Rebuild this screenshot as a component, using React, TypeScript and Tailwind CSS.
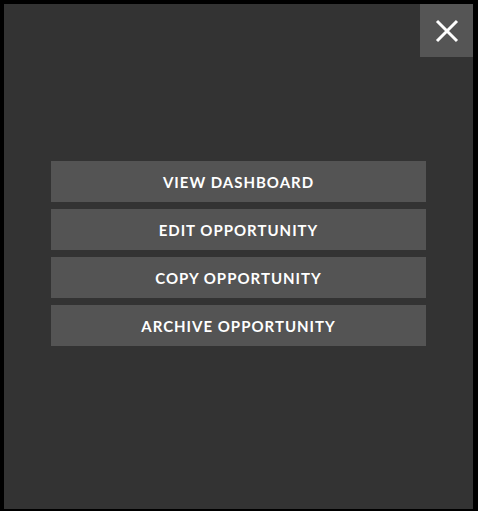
import React from "react";

const items = ["VIEW DASHBOARD", "EDIT OPPORTUNITY", "COPY OPPORTUNITY", "ARCHIVE OPPORTUNITY"];

export default function App() {
  return (
    <div className="w-[478px] h-[511px] bg-black pt-[4px] pl-[4px] pr-[5px] pb-[2px]">
      <div className="w-full h-full bg-[#333333] flex flex-col">
        <div className="flex justify-end">
          <button className="w-[53px] h-[53px] bg-[#555555] flex items-center justify-center">
            <svg width="24" height="24" viewBox="0 0 24 24" fill="none">
              <path d="M2 2L22 22M22 2L2 22" stroke="white" strokeWidth="3" />
            </svg>
          </button>
        </div>
        <div className="mt-[104px] px-[47px] flex flex-col gap-[7px]">
          {items.map((t) => (
            <button
              key={t}
              className="h-[41px] w-full bg-[#545454] text-white text-[15px] font-bold tracking-[1px] pt-[2px] flex items-center justify-center"
              style={{ fontFamily: "Lato, 'Open Sans', sans-serif" }}
            >
              {t}
            </button>
          ))}
        </div>
      </div>
    </div>
  );
}
